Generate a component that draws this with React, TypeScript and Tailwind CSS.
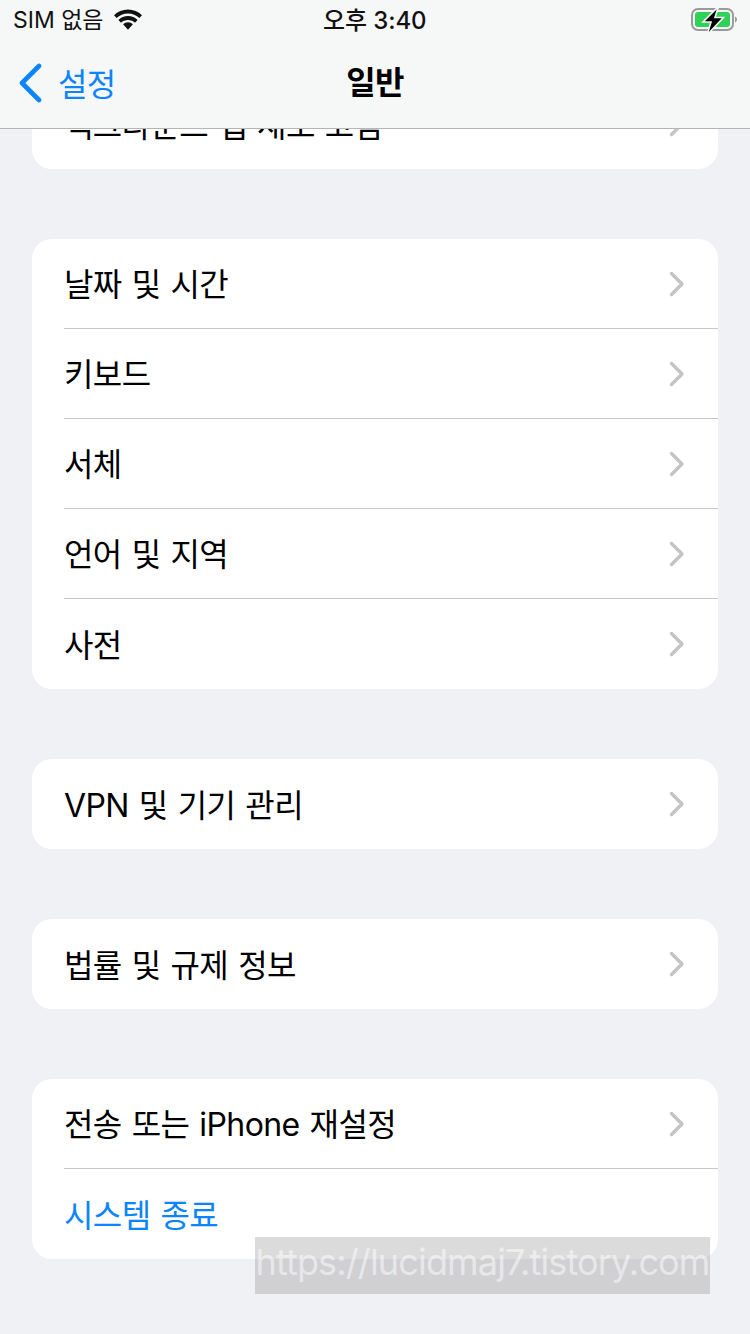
import React from 'react';

const font = { sans: 'font-["Inter","Noto_Sans_CJK_KR",sans-serif]' };

function Chevron() {
  return (
    <svg width="16" height="26" viewBox="0 0 16 26" fill="none" className="shrink-0">
      <path d="M2.5 2.5 L13 13 L2.5 23.5" stroke="#c4c4c7" strokeWidth="3.4" strokeLinecap="round" strokeLinejoin="round" />
    </svg>
  );
}

function Row({ label, last, blue }: { label: string; last?: boolean; blue?: boolean }) {
  return (
    <div className="pl-[32px]">
      <div className={`h-[90px] flex items-center justify-between pr-[33px] ${last ? '' : 'border-b border-[#c6c6c8]'}`}>
        <span className={`text-[32px] tracking-[-0.6px] [word-spacing:1.6px] leading-none mt-[3px] ${blue ? 'text-[#0a84ff]' : 'text-black'}`}>{label}</span>
        {!blue && <Chevron />}
      </div>
    </div>
  );
}

function Card({ items, blueLast }: { items: string[]; blueLast?: boolean }) {
  return (
    <div className="bg-white rounded-[20px] overflow-hidden">
      {items.map((item, i) => (
        <Row key={item} label={item} last={i === items.length - 1} blue={blueLast && i === items.length - 1} />
      ))}
    </div>
  );
}

function StatusBar() {
  return (
    <div className="h-[40px] pl-[13px] pr-[14px] flex items-center justify-between relative">
      <div className="flex items-center gap-[9px]">
        <span className="text-[23px] leading-none text-[#111] mt-[1px]">SIM 없음</span>
        <svg width="30" height="22" viewBox="0 0 30 22">
          <path d="M15 0.500c5.400 0 10.400 2.100 14 5.700l-2.600 2.900C23.500 6.200 19.500 4.500 15 4.500S6.500 6.200 3.600 9.100L1 6.200C4.600 2.600 9.600 0.500 15 0.500z" fill="#111" />
          <path d="M15 7c3.700 0 7.100 1.500 9.600 3.900L22 13.800C20.200 12 17.700 11 15 11s-5.200 1-7 2.800l-2.600-2.900C7.900 8.500 11.300 7 15 7z" fill="#111" />
          <path d="M15 13.200c-1.900 0-3.600.7-4.900 2L15 20.800l4.900-5.600c-1.300-1.300-3-2-4.900-2z" fill="#111" />
        </svg>
      </div>
      <span className="absolute left-[323px] top-[7px] text-[24px] leading-[28px] font-medium tracking-[-0.1px] text-[#111]">오후 3:40</span>
      <svg width="46" height="26" viewBox="0 0 46 26" className="mr-[-1px] overflow-visible">
        <rect x="1" y="2" width="41" height="21" rx="6" fill="none" stroke="#9a9a9a" strokeWidth="2" />
        <rect x="4" y="5" width="35" height="15" rx="3" fill="#30d158" />
        <path d="M44 9.500c1.200.4 2 1.600 2 3s-.8 2.600-2 3z" fill="#9a9a9a" />
        <path d="M27.500 -0.500 L12 15 H20 L16 28 L32.500 10.500 H24 Z" fill="#000" stroke="#f6f6f6" strokeWidth="1.600" />
      </svg>
    </div>
  );
}

export default function App() {
  return (
    <div className={`relative w-[750px] h-[1334px] overflow-hidden bg-[#f0f1f5] ${font.sans}`}>
      <div className="flex flex-col gap-[70px] px-[32px] pt-[79px]">
        <Card items={['백그라운드 앱 새로 고침']} />
        <Card items={['날짜 및 시간', '키보드', '서체', '언어 및 지역', '사전']} />
        <Card items={['VPN 및 기기 관리']} />
        <Card items={['법률 및 규제 정보']} />
        <Card items={['전송 또는 iPhone 재설정', '시스템 종료']} blueLast />
      </div>

      {/* header sits over the scrolled list */}
      <div className="absolute inset-x-0 top-0 h-[129px] bg-[#f6f7f7] border-b border-[#b5b5b7]">
        <StatusBar />
        <div className="relative h-[88px] flex items-center justify-center">
          <div className="absolute left-[18px] top-[23px] flex items-center gap-[16px]">
            <svg width="24" height="40" viewBox="0 0 24 40" fill="none">
              <path d="M21 3 L4 20 L21 37" stroke="#0a84ff" strokeWidth="4.600" strokeLinecap="round" strokeLinejoin="round" />
            </svg>
            <span className="text-[32px] leading-none tracking-[-0.6px] text-[#0a84ff] mt-[3px]">설정</span>
          </div>
          <span className="text-[32px] leading-none font-semibold tracking-[-0.6px] text-black mt-[-2px]">일반</span>
        </div>
      </div>

      {/* blog watermark */}
      <div className="absolute left-[255px] top-[1237px] w-[455px] h-[57px] bg-[#6e6e6e]/25 flex justify-center overflow-hidden">
        <span className="text-[36px] leading-[50px] tracking-[-0.85px] text-white/50 whitespace-nowrap">https://lucidmaj7.tistory.com</span>
      </div>
    </div>
  );
}
